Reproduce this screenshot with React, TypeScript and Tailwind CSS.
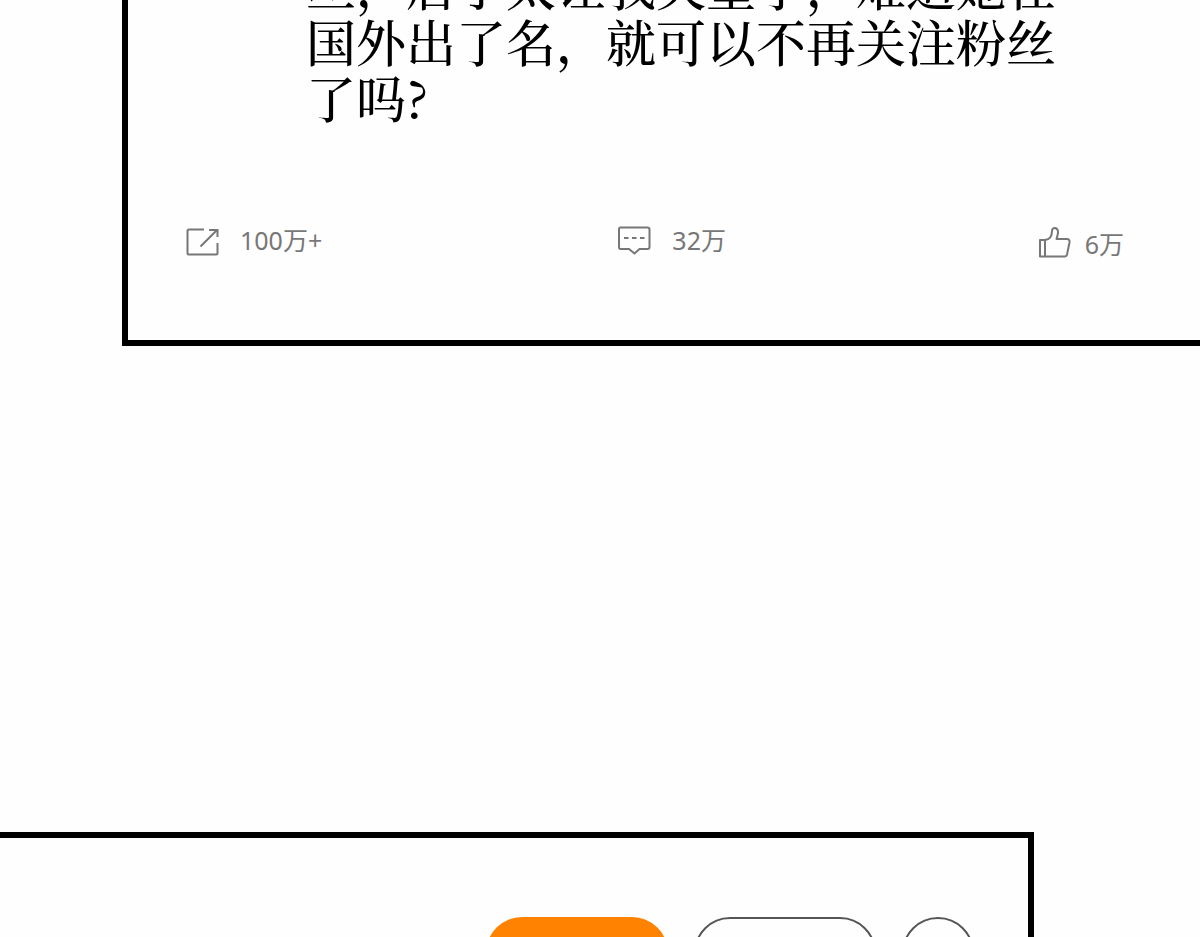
import React from 'react';

interface StatButtonProps {
  label: string;
  count: string;
  className?: string;
  children: React.ReactNode;
}

const StatButton: React.FC<StatButtonProps> = ({ label, count, className = 'gap-5', children }) => (
  <button
    type="button"
    aria-label={`${label} ${count}`}
    className={`flex items-center text-[25px] leading-9 text-[#777777] ${className}`}
  >
    {children}
    <span>{count}</span>
  </button>
);

const ShareIcon = () => (
  <svg className="size-9" viewBox="0 0 36 36" fill="none" stroke="currentColor" strokeWidth="2">
    <path d="M20 7.5H5Q3.5 7.5 3.5 9V31Q3.5 32.5 5 32.5H32Q33.5 32.5 33.5 31V21" />
    <path d="M16.5 24.5 33 8M25 8H33.5V15" />
  </svg>
);

const CommentIcon = () => (
  <svg className="size-9" viewBox="0 0 36 36" fill="none" stroke="currentColor" strokeWidth="2">
    <path d="M4.5 5.5H31.5Q33.5 5.5 33.5 7.5V25Q33.5 27 31.5 27H23.5L18.5 31.5 13 27H4.5Q3 27 3 25V7.5Q3 5.5 4.5 5.5Z" />
    <path d="M8 16H12.5M16 16H20.5M24 16H28.5" />
  </svg>
);

const LikeIcon = () => (
  <svg className="size-9" viewBox="0 0 36 36" fill="none" stroke="currentColor" strokeWidth="2" strokeLinejoin="round">
    <path d="M3 14H8V30.5H3Z" />
    <path d="M8 14C13 13.5 15 9.5 15 5C15 1 20.5 1 21 5.5C21.2 8.5 20 11 19.5 13H30C32 13 32.8 14.5 32.5 16.5L30 28.5Q29.5 30.5 27.5 30.5H8" />
  </svg>
);

const App: React.FC = () => {
  return (
    <div
      lang="zh-CN"
      className="flex h-screen flex-col overflow-hidden bg-[#fefefe] font-['Noto_Sans','Noto_Sans_CJK_SC',sans-serif]"
    >
      <article className="-mt-11 ml-[122px] shrink-0 border-b-6 border-l-6 border-black pr-[76px] pb-[78px] pl-[56px]">
        <p className="ml-[122px] w-[752px] font-['Noto_Serif_CJK_SC','Noto_Serif_SC','Source_Han_Serif_SC','Noto_Sans_CJK_SC',serif] text-[50px] leading-[56px] font-medium text-black">
          丝，后于太让我失望了，难道她在国外出了名，就可以不再关注粉丝了吗?
        </p>
        <div className="mt-[98px] grid grid-cols-[36fr_35fr_auto] items-start justify-items-start">
          <StatButton label="转发" count="100万+">
            <ShareIcon />
          </StatButton>
          <StatButton label="评论" count="32万">
            <CommentIcon />
          </StatButton>
          <StatButton label="点赞" count="6万" className="gap-3 pt-1">
            <LikeIcon />
          </StatButton>
        </div>
      </article>

      <section className="mt-[486px] mr-[166px] h-[240px] shrink-0 border-t-6 border-r-6 border-black pt-[79px] pr-[54px]">
        <div className="flex justify-end gap-[26px]">
          <button type="button" aria-label="关注" className="h-[72px] w-[182px] rounded-full bg-[#ff8200]" />
          <button type="button" aria-label="私信" className="h-[72px] w-[182px] rounded-full border-2 border-[#555555]" />
          <button type="button" aria-label="更多" className="size-[72px] rounded-full border-2 border-[#555555]" />
        </div>
      </section>
    </div>
  );
};

export default App;
